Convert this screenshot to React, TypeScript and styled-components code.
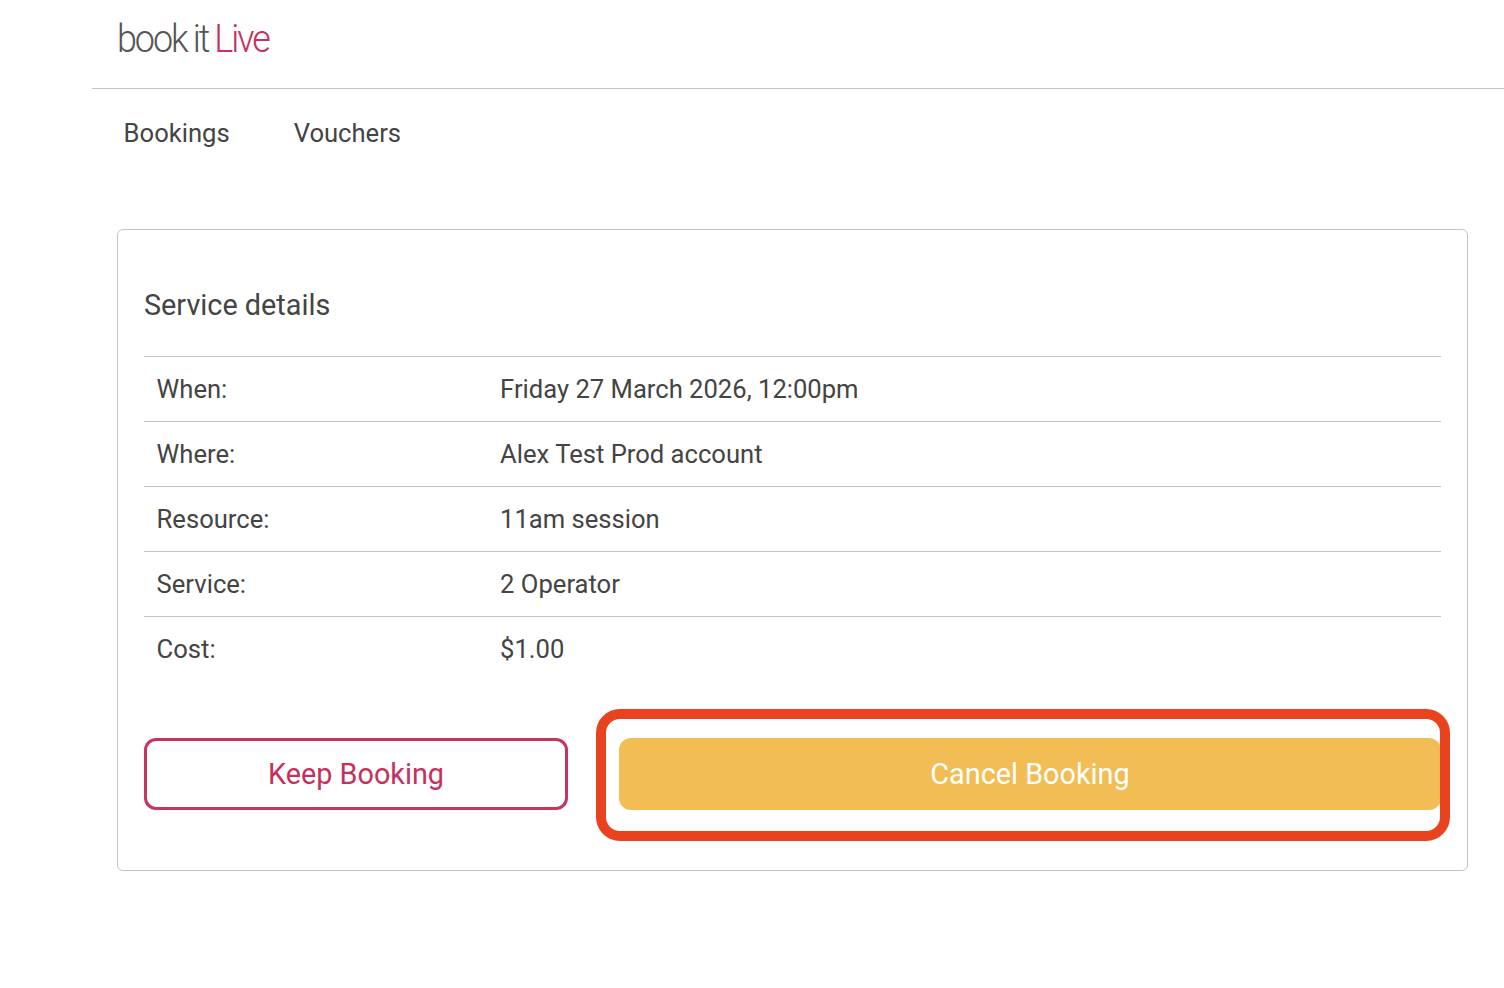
import styled, { createGlobalStyle } from 'styled-components';

type Detail = {
  label: string;
  value: string;
};

const details: Detail[] = [
  { label: 'When:', value: 'Friday 27 March 2026, 12:00pm' },
  { label: 'Where:', value: 'Alex Test Prod account' },
  { label: 'Resource:', value: '11am session' },
  { label: 'Service:', value: '2 Operator' },
  { label: 'Cost:', value: '$1.00' },
];

export default function App() {
  return (
    <>
      <GlobalStyle />
      <Page>
        <Header>
          <Logo>
            book it <LogoAccent>Live</LogoAccent>
          </Logo>
        </Header>
        <Nav>
          <NavLink>Bookings</NavLink>
          <NavLink>Vouchers</NavLink>
        </Nav>
        <Card>
          <Title>Service details</Title>
          <Table>
            {details.map(detail => (
              <Row key={detail.label}>
                <Label>{detail.label}</Label>
                <Value>{detail.value}</Value>
              </Row>
            ))}
          </Table>
          <Actions>
            <KeepButton>Keep Booking</KeepButton>
            <CancelWrap>
              <CancelButton>Cancel Booking</CancelButton>
              <Highlight />
            </CancelWrap>
          </Actions>
        </Card>
      </Page>
    </>
  );
}

const GlobalStyle = createGlobalStyle`
  html, body {
    margin: 0;
    padding: 0;
    background: #fff;
    overflow: hidden;
  }
  body {
    font-family: Roboto, "Liberation Sans", sans-serif;
    color: #444;
  }
`;

const Page = styled.div`
  width: 1504px;
  height: 988px;
  padding-left: 92px;
  box-sizing: border-box;
`;

const Header = styled.header`
  height: 89px;
  box-sizing: border-box;
  border-bottom: 1px solid #c4c4c4;
  padding: 15px 0 0 25px;
`;

const Logo = styled.div`
  font-size: 38px;
  line-height: 48px;
  font-weight: 300;
  letter-spacing: -2.2px;
  word-spacing: -0.5px;
  color: #555;
  transform: scaleX(0.945);
  transform-origin: left center;
`;

const LogoAccent = styled.span`
  color: #c5305d;
`;

const Nav = styled.nav`
  display: flex;
  gap: 64px;
  padding: 29px 0 0 31.6px;
  height: 140px;
  box-sizing: border-box;
`;

const NavLink = styled.a`
  font-size: 25.6px;
  line-height: 30px;
  color: #444;
`;

const Card = styled.section`
  width: 1351px;
  height: 642px;
  margin-left: 25px;
  box-sizing: border-box;
  border: 1px solid #c4c4c4;
  border-radius: 6px;
  padding: 0 26px;
`;

const Title = styled.h2`
  margin: 0;
  padding-top: 57px;
  height: 126px;
  box-sizing: border-box;
  font-size: 28.8px;
  line-height: 36px;
  font-weight: 400;
  color: #444;
`;

const Table = styled.div`
  display: flex;
  flex-direction: column;
`;

const Row = styled.div`
  display: grid;
  grid-template-columns: 343.5px 1fr;
  height: 65px;
  box-sizing: border-box;
  padding-left: 12.6px;
  align-items: center;
  border-top: 1px solid #c4c4c4;
  font-size: 25.6px;
  color: #444;
`;

const Label = styled.span``;

const Value = styled.span``;

const Actions = styled.div`
  display: flex;
  justify-content: space-between;
  margin-top: 57px;
`;

const KeepButton = styled.button`
  width: 424px;
  height: 72px;
  box-sizing: border-box;
  border: 3px solid #c5355e;
  border-radius: 12px;
  background: #fff;
  color: #c5305d;
  font: 400 28.8px Roboto, sans-serif;
`;

const CancelWrap = styled.div`
  position: relative;
  width: 822px;
  height: 72px;
`;

const CancelButton = styled.button`
  width: 100%;
  height: 100%;
  border: 0;
  border-radius: 12px;
  background: #f2bd55;
  color: #fff;
  font: 400 28.8px Roboto, sans-serif;
`;

const Highlight = styled.div`
  position: absolute;
  left: -23px;
  right: -9px;
  top: -29px;
  bottom: -31px;
  border: 10px solid #e8431e;
  border-radius: 24px;
  pointer-events: none;
`;
